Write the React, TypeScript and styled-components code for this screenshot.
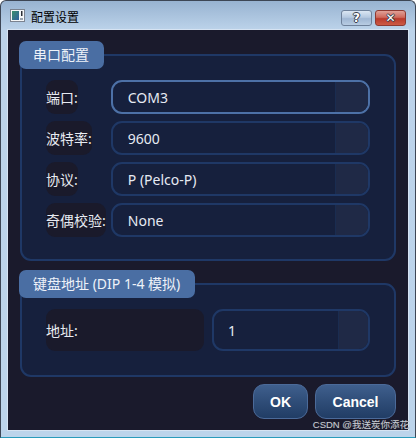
import { Fragment } from 'react';
import styled, { createGlobalStyle } from 'styled-components';

const GlobalStyle = createGlobalStyle`
  html, body {
    margin: 0;
    padding: 0;
    background: #ffffff;
  }
  * {
    box-sizing: border-box;
  }
`;

const UI_FONT = `"Noto Sans", "Noto Sans CJK SC", sans-serif`;

const Window = styled.div`
  position: relative;
  width: 416px;
  height: 438px;
  display: flex;
  flex-direction: column;
  padding: 0 7px 7px 7px;
  border: 1px solid #3d4655;
  border-bottom-color: #2a9bbb;
  border-radius: 6px 6px 0 0;
  background: linear-gradient(to bottom, #98b3d1 0, #bcd3ea 29px, #bcd4eb 100%);
  font-family: ${UI_FONT};
`;

const TitleBar = styled.div`
  height: 29px;
  display: flex;
  align-items: center;
  padding-left: 2px;
  gap: 6px;
`;

const TitleText = styled.span`
  flex: 1;
  font-family: "Noto Sans CJK SC", sans-serif;
  font-size: 12px;
  color: #000000;
  padding-top: 1px;
`;

const CaptionButtons = styled.div`
  display: flex;
  gap: 3px;
  margin-right: 2px;
  align-self: flex-start;
  padding-top: 9px;
`;

const CaptionButton = styled.div<{ $danger?: boolean }>`
  width: 31px;
  height: 16px;
  border-radius: 3px;
  border: 1px solid ${(p) => (p.$danger ? '#8e3a32' : '#6e819b')};
  background: ${(p) =>
    p.$danger
      ? 'linear-gradient(to bottom, #e0a198 0%, #cf6a5d 45%, #b93a2c 55%, #cc5a45 100%)'
      : 'linear-gradient(to bottom, #dbe6f3 0%, #b5c9e0 45%, #9fb6d3 55%, #b8cce3 100%)'};
  display: flex;
  align-items: center;
  justify-content: center;
  font-family: "DejaVu Sans", sans-serif;
  font-weight: bold;
  font-size: 12px;
  line-height: 1;
  color: #ffffff;
  text-shadow: 0 0 1px #2d3440, 1px 0 0 #3b4250, -1px 0 0 #3b4250, 0 1px 0 #3b4250, 0 -1px 0 #3b4250;
`;

const Client = styled.div`
  flex: 1;
  display: flex;
  flex-direction: column;
  padding: 11px 12px 11px 12px;
  background: #1a1a2c;
  box-shadow: 0 0 0 1px #d6e3f2;
`;

const Group = styled.section<{ $gapTop?: number }>`
  display: flex;
  flex-direction: column;
  margin-top: ${(p) => p.$gapTop ?? 0}px;
`;

const GroupTab = styled.div`
  position: relative;
  z-index: 1;
  align-self: flex-start;
  height: 28px;
  margin-left: -1px;
  padding: 0 15px 0 14px;
  border-radius: 7px;
  background: #4a6ea3;
  color: #eef2f9;
  font-size: 14px;
  line-height: 28px;
  white-space: nowrap;
`;

const GroupBox = styled.div<{ $padBottom: number }>`
  margin-top: -15px;
  border: 2px solid #1f3866;
  border-radius: 11px;
  background: #16203d;
  padding: 24px 24px ${(p) => p.$padBottom}px 24px;
`;

const FormGrid = styled.div`
  display: grid;
  grid-template-columns: auto 1fr;
  column-gap: 5px;
  row-gap: 7px;
`;

const SplitGrid = styled.div`
  display: grid;
  grid-template-columns: 1fr 1fr;
  column-gap: 8px;
`;

const FieldLabel = styled.div<{ $height: number; $stretch?: boolean }>`
  justify-self: ${(p) => (p.$stretch ? 'stretch' : 'start')};
  height: ${(p) => p.$height}px;
  display: flex;
  align-items: center;
  border-radius: 9px;
  background: #1a1a2b;
  color: #e8ebf2;
  font-size: 14px;
  white-space: nowrap;
`;

const Field = styled.div<{ $height: number; $focused?: boolean }>`
  height: ${(p) => p.$height}px;
  display: flex;
  border: 2px solid ${(p) => (p.$focused ? '#4d71a7' : '#1f3866')};
  border-radius: 11px;
  background: #16203d;
  overflow: hidden;
`;

const FieldValue = styled.div<{ $pad: number }>`
  flex: 1;
  display: flex;
  align-items: center;
  padding-left: ${(p) => p.$pad}px;
  color: #e6eaf3;
  font-size: 14px;
  white-space: nowrap;
`;

const FieldButton = styled.div<{ $width: number }>`
  width: ${(p) => p.$width}px;
  background: #1f2946;
  border-left: 1px solid #1a2c50;
`;

const ButtonRow = styled.div`
  display: flex;
  justify-content: flex-end;
  gap: 7px;
  margin-top: 7px;
`;

const DialogButton = styled.button<{ $width: number }>`
  width: ${(p) => p.$width}px;
  height: 35px;
  padding: 0;
  border: 1px solid #4b6a99;
  border-radius: 11px;
  background: linear-gradient(to bottom, #3f5f8d 0%, #2f4d78 50%, #213d65 100%);
  color: #ffffff;
  font-family: "Liberation Sans", Arial, sans-serif;
  font-weight: bold;
  font-size: 14px;
`;

const Watermark = styled.div`
  position: absolute;
  right: 6px;
  bottom: 6px;
  font-family: "Liberation Sans", "Noto Sans CJK SC", sans-serif;
  font-size: 9.5px;
  line-height: 12px;
  color: #c9ccd3;
  text-shadow: 0 0 1px #4a4e58;
  white-space: nowrap;
`;

const WindowIcon = () => (
  <svg width="15" height="13" viewBox="0 0 15 13">
    <defs>
      <linearGradient id="wi" x1="0" y1="0" x2="1" y2="1">
        <stop offset="0" stopColor="#3b8f6c" />
        <stop offset="1" stopColor="#2f5f9f" />
      </linearGradient>
    </defs>
    <rect x="0.5" y="0.5" width="14" height="12" fill="#f4f6f8" stroke="#7b8390" />
    <rect x="2" y="2" width="7" height="9" fill="url(#wi)" />
    <rect x="11" y="2" width="1.5" height="5" fill="#2b2f36" />
    <rect x="10" y="9" width="3" height="2" fill="#9aa3ae" />
  </svg>
);

const serialRows = [
  { label: '端口:', value: 'COM3', focused: true },
  { label: '波特率:', value: '9600' },
  { label: '协议:', value: 'P (Pelco-P)' },
  { label: '奇偶校验:', value: 'None' },
];

export default function App() {
  return (
    <>
      <GlobalStyle />
      <Window>
        <TitleBar>
          <WindowIcon />
          <TitleText>配置设置</TitleText>
          <CaptionButtons>
            <CaptionButton>?</CaptionButton>
            <CaptionButton $danger>✕</CaptionButton>
          </CaptionButtons>
        </TitleBar>
        <Client>
          <Group>
            <GroupTab>串口配置</GroupTab>
            <GroupBox $padBottom={22}>
              <FormGrid>
                {serialRows.map((row) => (
                  <Fragment key={row.label}>
                    <FieldLabel $height={34}>{row.label}</FieldLabel>
                    <Field $height={34} $focused={row.focused}>
                      <FieldValue $pad={15}>{row.value}</FieldValue>
                      <FieldButton $width={33} />
                    </Field>
                  </Fragment>
                ))}
              </FormGrid>
            </GroupBox>
          </Group>
          <Group $gapTop={9}>
            <GroupTab>键盘地址 (DIP 1-4 模拟)</GroupTab>
            <GroupBox $padBottom={24}>
              <SplitGrid>
                <FieldLabel $height={42} $stretch>地址:</FieldLabel>
                <Field $height={42}>
                  <FieldValue $pad={14}>1</FieldValue>
                  <FieldButton $width={30} />
                </Field>
              </SplitGrid>
            </GroupBox>
          </Group>
          <ButtonRow>
            <DialogButton $width={55}>OK</DialogButton>
            <DialogButton $width={81}>Cancel</DialogButton>
          </ButtonRow>
        </Client>
        <Watermark>CSDN @我送炭你添花</Watermark>
      </Window>
    </>
  );
}
